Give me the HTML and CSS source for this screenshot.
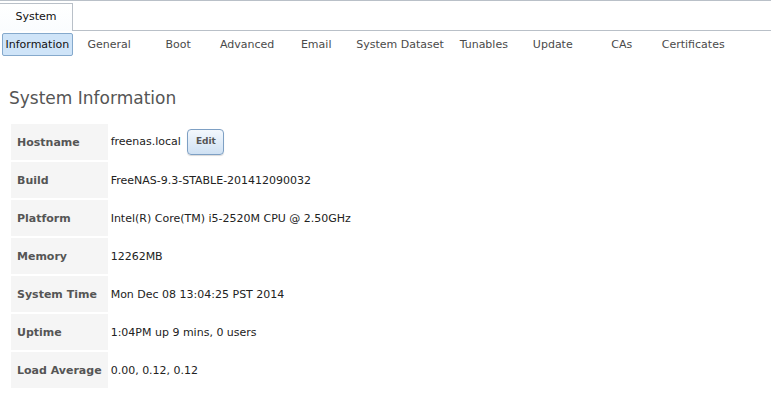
FILE: index.html
```html
<!DOCTYPE html>
<html lang="en">

<head>
    <meta charset="UTF-8">
    <title>System</title>
    <link rel="stylesheet" href="styles.css">
</head>

<body>
    <div class="top-tabs">
        <div class="top-tab">System</div>
        <div class="top-rest"></div>
    </div>

    <div class="sub-tabs">
        <div class="sub-tab active">Information</div>
        <div class="sub-tab">General</div>
        <div class="sub-tab">Boot</div>
        <div class="sub-tab">Advanced</div>
        <div class="sub-tab">Email</div>
        <div class="sub-tab">System Dataset</div>
        <div class="sub-tab">Tunables</div>
        <div class="sub-tab">Update</div>
        <div class="sub-tab">CAs</div>
        <div class="sub-tab">Certificates</div>
    </div>

    <h1 class="page-title">System Information</h1>

    <table class="info-table">
        <tr>
            <th>Hostname</th>
            <td>freenas.local <button class="edit-btn">Edit</button></td>
        </tr>
        <tr>
            <th>Build</th>
            <td>FreeNAS-9.3-STABLE-201412090032</td>
        </tr>
        <tr>
            <th>Platform</th>
            <td>Intel(R) Core(TM) i5-2520M CPU @ 2.50GHz</td>
        </tr>
        <tr>
            <th>Memory</th>
            <td>12262MB</td>
        </tr>
        <tr>
            <th>System Time</th>
            <td>Mon Dec 08 13:04:25 PST 2014</td>
        </tr>
        <tr>
            <th>Uptime</th>
            <td>1:04PM up 9 mins, 0 users</td>
        </tr>
        <tr>
            <th>Load Average</th>
            <td>0.00, 0.12, 0.12</td>
        </tr>
    </table>
</body>

</html>
```

FILE: styles.css
```css
* {
    margin: 0;
    padding: 0;
    box-sizing: border-box;
}

body {
    font-family: 'DejaVu Sans', sans-serif;
    font-size: 11px;
    color: #222;
    background: #fff;
}

/* top tab strip */
.top-tabs {
    display: flex;
    height: 31px;
    border-top: 1px solid #b9c0c8;
}

.top-tab {
    width: 73px;
    margin-top: 2px;
    border-top: 1px solid #b9c0c8;
    border-right: 1px solid #b9c0c8;
    background: linear-gradient(#fff, #fafcfe);
    display: flex;
    align-items: center;
    justify-content: center;
    color: #111;
    padding-bottom: 2px;
}

.top-rest {
    flex: 1;
    border-bottom: 1px solid #b9c0c8;
}

/* sub tabs */
.sub-tabs {
    display: flex;
    gap: 4px;
    padding: 2px 2px 0;
}

.sub-tab {
    min-width: 65px;
    height: 23px;
    padding: 0 2.5px;
    border: 1px solid transparent;
    border-radius: 2px;
    display: flex;
    align-items: center;
    justify-content: center;
    color: #4a4a4a;
    white-space: nowrap;
}

.sub-tab.active {
    background: #cfe4f8;
    border-color: #85a9cc;
    color: #111;
}

.page-title {
    font-size: 17px;
    font-weight: normal;
    color: #555;
    margin: 31px 0 0 9px;
    line-height: 22px;
}

.info-table {
    margin: 13px 0 0 9px;
    border-spacing: 2px;
}

.info-table th,
.info-table td {
    height: 36px;
    vertical-align: middle;
    text-align: left;
}

.info-table th {
    background: #f5f5f5;
    color: #555;
    font-weight: bold;
    padding: 0 6px;
    white-space: nowrap;
}

.info-table td {
    padding: 0 1px;
}

.edit-btn {
    font-family: 'DejaVu Sans', sans-serif;
    font-size: 9px;
    font-weight: bold;
    color: #555;
    width: 37px;
    height: 26px;
    margin-left: 3px;
    border: 1px solid #7ea0c4;
    border-radius: 4px;
    background: linear-gradient(#f3f8fd, #cfe1f3);
    box-shadow: 0 1px 1px rgba(0, 0, 0, 0.15);
    vertical-align: middle;
    padding-bottom: 3px;
}
```
